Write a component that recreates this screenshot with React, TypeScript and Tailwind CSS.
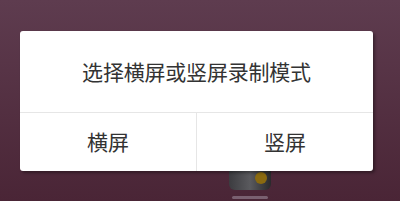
export default function App() {
  return (
    <div
      className="relative w-[400px] h-[201px] overflow-hidden bg-gradient-to-b from-[#5e3c4f] to-[#4a2536] pt-[31px] pl-[20px]"
      style={{ fontFamily: '"Noto Sans CJK SC", "Noto Sans", sans-serif' }}
    >
      {/* partially hidden app icon under the dialog */}
      <div className="absolute left-[229px] top-[160px] w-[42px] h-[30px] rounded-[6px] bg-gradient-to-r from-[#3c3c40] via-[#5a5a5e] to-[#2a2a2c]">
        <div className="absolute right-[4px] bottom-[6px] w-[12px] h-[12px] rounded-full bg-[#8a6a10]" />
      </div>
      <div className="absolute left-[232px] top-[196px] w-[36px] h-[3px] bg-[#7a6070] rounded" />

      <div className="relative w-[353px] h-[140px] bg-white rounded-[3px] shadow-[2px_2px_3px_rgba(0,0,0,0.35)] flex flex-col">
        <div className="h-[81px] flex items-center justify-center text-[21px] text-[#333333] tracking-[-0.2px]">
          选择横屏或竖屏录制模式
        </div>
        <div className="h-px bg-[#e6e6e6]" />
        <div className="flex flex-1">
          <div className="flex-1 flex items-center justify-center text-[21px] text-[#333333]">
            横屏
          </div>
          <div className="w-px bg-[#e6e6e6]" />
          <div className="flex-1 flex items-center justify-center text-[21px] text-[#333333]">
            竖屏
          </div>
        </div>
      </div>
    </div>
  );
}
